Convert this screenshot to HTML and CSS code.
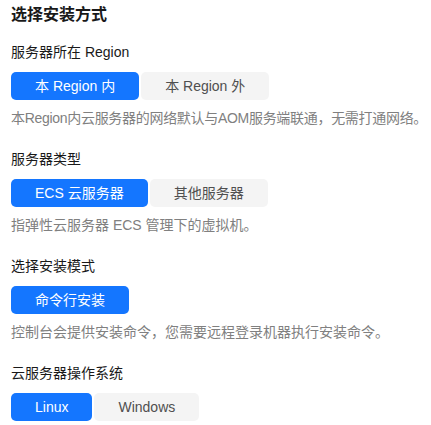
FILE: index.html
```html
<!DOCTYPE html>
<html lang="zh-CN">
<head>
<meta charset="utf-8">
<link rel="stylesheet" href="styles.css">
</head>
<body>
<div class="panel">
  <h1 class="title">选择安装方式</h1>

  <section class="field">
    <div class="label">服务器所在 Region</div>
    <div class="options">
      <button class="opt active">本 Region 内</button>
      <button class="opt">本 Region 外</button>
    </div>
    <p class="desc desc-tight">本Region内云服务器的网络默认与AOM服务端联通，无需打通网络。</p>
  </section>

  <section class="field">
    <div class="label">服务器类型</div>
    <div class="options">
      <button class="opt active">ECS 云服务器</button>
      <button class="opt">其他服务器</button>
    </div>
    <p class="desc">指弹性云服务器 ECS 管理下的虚拟机。</p>
  </section>

  <section class="field">
    <div class="label">选择安装模式</div>
    <div class="options">
      <button class="opt active">命令行安装</button>
    </div>
    <p class="desc">控制台会提供安装命令，您需要远程登录机器执行安装命令。</p>
  </section>

  <section class="field">
    <div class="label">云服务器操作系统</div>
    <div class="options">
      <button class="opt active">Linux</button>
      <button class="opt">Windows</button>
    </div>
  </section>
</div>
</body>
</html>
```

FILE: styles.css
```css
* { box-sizing: border-box; }
html, body {
  margin: 0;
  padding: 0;
  background: #ffffff;
}
body {
  font-family: "Liberation Sans", Arial, "Noto Sans CJK SC", sans-serif;
  color: #191919;
}
.panel {
  padding: 3px 11px 0 11px;
  display: flex;
  flex-direction: column;
}
.title {
  margin: 0 0 14px 0;
  font-size: 16px;
  line-height: 24px;
  font-weight: 700;
  color: #191919;
}
.field {
  display: flex;
  flex-direction: column;
  margin-bottom: 19px;
}
.label {
  font-size: 14px;
  line-height: 22px;
  color: #191919;
  margin-bottom: 9px;
}
.options {
  display: flex;
  gap: 2px;
}
.opt {
  height: 28px;
  padding: 0 24px;
  border: none;
  border-radius: 5px;
  font-family: inherit;
  font-size: 14px;
  line-height: 28px;
  background: #f4f4f4;
  color: #4f4f4f;
  white-space: nowrap;
  cursor: pointer;
}
.opt.active {
  background: #1476ff;
  color: #ffffff;
}
.desc {
  margin: 7px 0 0 0;
  font-size: 14px;
  line-height: 22px;
  color: #808080;
  white-space: nowrap;
}
.desc-tight {
  letter-spacing: -0.3px;
}
```
